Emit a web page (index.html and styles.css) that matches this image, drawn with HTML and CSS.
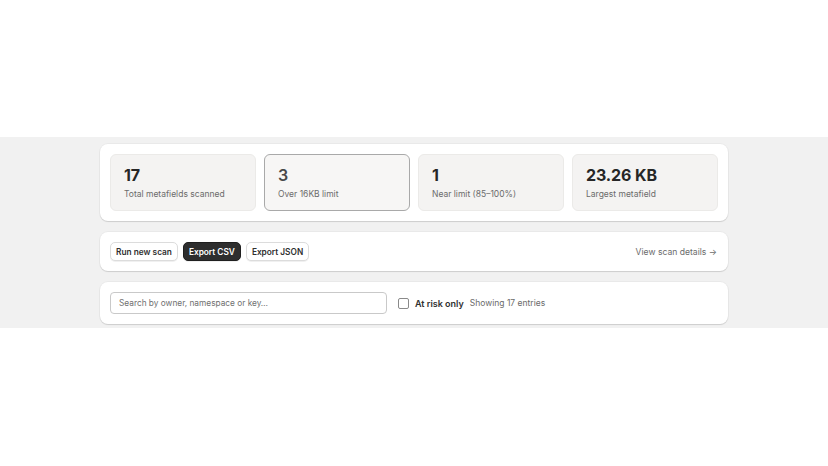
FILE: index.html
```html
<!DOCTYPE html>
<html lang="en">
<head>
<meta charset="utf-8">
<title>Metafield scan</title>
<link rel="stylesheet" href="styles.css">
</head>
<body>
<div class="top"></div>
<section class="band">
  <div class="card stats">
    <div class="tile"><div class="num">17</div><div class="lbl">Total metafields scanned</div></div>
    <div class="tile active"><div class="num light">3</div><div class="lbl">Over 16KB limit</div></div>
    <div class="tile"><div class="num">1</div><div class="lbl">Near limit (85–100%)</div></div>
    <div class="tile"><div class="num">23.26 KB</div><div class="lbl">Largest metafield</div></div>
  </div>
  <div class="card actions">
    <div class="btns">
      <button class="btn">Run new scan</button>
      <button class="btn dark">Export CSV</button>
      <button class="btn">Export JSON</button>
    </div>
    <a class="link" href="#">View scan details →</a>
  </div>
  <div class="card filters">
    <input class="search" type="text" placeholder="Search by owner, namespace or key…">
    <label class="check"><span class="box"></span>At risk only</label>
    <span class="count">Showing 17 entries</span>
  </div>
</section>
</body>
</html>
```
FILE: styles.css
```css
* { box-sizing: border-box; }
body {
  margin: 0;
  background: #fff;
  font-family: Inter, "Noto Sans", sans-serif;
  color: #303030;
}
.top { height: 137px; }
.band {
  background: #f1f1f1;
  padding: 7px 100px 4px;
  display: flex;
  flex-direction: column;
  gap: 11px;
}
.card {
  background: #fff;
  border-radius: 8px;
  box-shadow: 0 1px 1px rgba(0,0,0,0.12), 0 0 0 1px rgba(0,0,0,0.03);
}
.stats {
  padding: 10px;
  display: grid;
  grid-template-columns: repeat(4, 1fr);
  gap: 8px;
}
.tile {
  height: 57px;
  background: #f4f3f2;
  border: 1px solid #ebeae8;
  border-radius: 6px;
  padding: 10px 13px 0;
}
.tile.active {
  background: #f7f6f5;
  border-color: #a9a9a9;
}
.num {
  font-size: 16px;
  font-weight: 700;
  line-height: 20px;
  color: #262626;
  letter-spacing: -0.1px;
}
.num.light { font-weight: 600; color: #484848; }
.lbl {
  margin-top: 4px;
  font-size: 8.5px;
  line-height: 11px;
  color: #6b6b6b;
}
.actions {
  padding: 10px;
  display: flex;
  align-items: center;
  justify-content: space-between;
}
.btns { display: flex; gap: 5px; }
.btn {
  font-family: inherit;
  font-size: 8.3px;
  font-weight: 600;
  height: 19px;
  padding: 0 5px;
  border: 1px solid #dcdcdc;
  border-radius: 5px;
  background: #fff;
  color: #303030;
  box-shadow: 0 1px 0 rgba(0,0,0,0.06);
}
.btn.dark {
  background: #2e2e2e;
  border-color: #1f1f1f;
  color: #fff;
}
.link {
  font-size: 8.6px;
  color: #6b6b6b;
  text-decoration: none;
  padding-right: 1px;
}
.filters {
  padding: 10px;
  height: 42px;
  display: flex;
  align-items: center;
}
.search {
  width: 277px;
  height: 22px;
  border: 1px solid #c9c9c9;
  border-radius: 4px;
  padding: 0 8px;
  font-family: inherit;
  font-size: 8.3px;
  color: #303030;
}
.search::placeholder { color: #707070; }
.check {
  display: flex;
  align-items: center;
  gap: 6px;
  margin-left: 11px;
  font-size: 9px;
  font-weight: 600;
  color: #303030;
}
.box {
  width: 11px;
  height: 11px;
  border: 1px solid #8a8a8a;
  border-radius: 2px;
  background: #fff;
}
.count {
  margin-left: 6px;
  font-size: 8.5px;
  color: #6b6b6b;
}
```
